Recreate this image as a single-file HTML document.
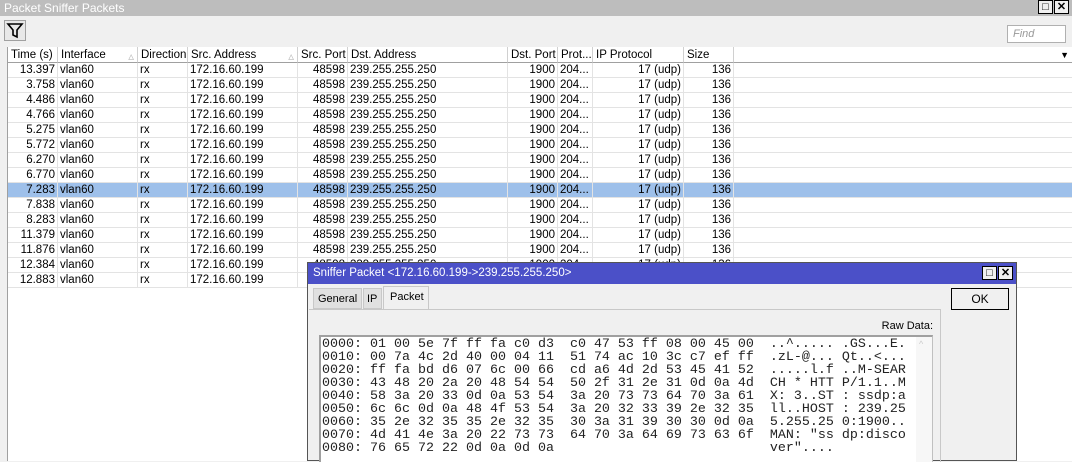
<!DOCTYPE html>
<html><head><style>
*{margin:0;padding:0;box-sizing:border-box}
body{width:1072px;height:461px;overflow:hidden;background:#f0f0f0;font-family:"Liberation Sans",sans-serif;font-size:11px;color:#000;position:relative}
.abs{position:absolute}
.tb{left:0;top:0;width:1072px;height:16px;background:#bdbdbd;color:#fff;font-size:12px;padding:1px 0 0 4px}
.wbtn{top:0;width:15px;height:14px;border:1px solid #000;background:#f0f0f0;font-size:11px;text-align:center;line-height:12px;font-weight:bold}
.grid{left:7px;top:47px;width:1065px;height:414px;background:#fff;border-left:1px solid #a0a0a0}
.hdr{position:absolute;top:0;height:16px;border-right:1px solid #d0d0d0;border-bottom:1px solid #a0a0a0;background:#fff;padding:2px 0 0 3px;white-space:nowrap;font-size:11.5px;z-index:2}
.row{position:absolute;left:0;width:1065px;height:15px;border-bottom:1px solid #e3e3e3}
.c{position:absolute;top:0;height:15px;line-height:15px;border-right:1px solid #e3e3e3;white-space:nowrap;overflow:hidden;padding:0 2px;font-size:11.5px}
.r{text-align:right}
.sel{background:#9ec0ea}
.dlg{left:307px;top:262px;width:710px;height:199px;background:#f0f0f0;border:1px solid #555}
.dt{left:0;top:0;width:708px;height:21px;background:#4b50c8;color:#fff;font-size:11.5px;padding:4px 0 0 5px}
pre{font-family:"Liberation Mono",monospace;font-size:13.33px;line-height:13px;position:absolute;white-space:pre;color:#222}
</style></head><body>
<div class="abs tb">Packet Sniffer Packets</div>
<div class="abs wbtn" style="left:1038px">□</div>
<div class="abs wbtn" style="left:1054px">✕</div>
<div class="abs" style="left:4px;top:20px;width:22px;height:21px;border:1px solid #a0a0a0;background:#e8e8e8">
<svg width="20" height="19" viewBox="0 0 20 19"><path d="M3 3h14l-5 6v7l-4-2V9z" fill="none" stroke="#000" stroke-width="1.6"/></svg></div>
<div class="abs" style="left:1007px;top:25px;width:59px;height:18px;border:1px solid #b0b0b0;background:#fff;color:#999;font-style:italic;padding:2px 0 0 5px">Find</div>
<div class="abs grid">
<div class="hdr" style="left:0;width:50px">Time (s)</div>
<div class="hdr" style="left:50px;width:80px">Interface <span style="color:#bbb;position:absolute;right:3px">▵</span></div>
<div class="hdr" style="left:130px;width:50px">Direction</div>
<div class="hdr" style="left:180px;width:110px">Src. Address <span style="color:#bbb;position:absolute;right:3px">▵</span></div>
<div class="hdr" style="left:290px;width:50px">Src. Port</div>
<div class="hdr" style="left:340px;width:160px">Dst. Address</div>
<div class="hdr" style="left:500px;width:50px">Dst. Port</div>
<div class="hdr" style="left:550px;width:35px">Prot...</div>
<div class="hdr" style="left:585px;width:91px">IP Protocol</div>
<div class="hdr" style="left:676px;width:50px">Size</div>
<div class="hdr" style="left:726px;width:339px;border-right:none"><span style="position:absolute;right:4px;top:3px;font-size:9px">▼</span></div>
<div id="rows"></div>
</div>
<script>
var t=["13.397","3.758","4.486","4.766","5.275","5.772","6.270","6.770","7.283","7.838","8.283","11.379","11.876","12.384","12.883"];
var h="";
for(var i=0;i<t.length;i++){
h+='<div class="row'+(i==8?' sel':'')+'" style="top:'+(16+i*15)+'px">'+
'<div class="c r" style="left:0;width:50px">'+t[i]+'</div>'+
'<div class="c" style="left:50px;width:80px">vlan60</div>'+
'<div class="c" style="left:130px;width:50px">rx</div>'+
'<div class="c" style="left:180px;width:110px">172.16.60.199</div>'+
'<div class="c r" style="left:290px;width:50px">48598</div>'+
'<div class="c" style="left:340px;width:160px">239.255.255.250</div>'+
'<div class="c r" style="left:500px;width:50px">1900</div>'+
'<div class="c" style="left:550px;width:35px">204...</div>'+
'<div class="c r" style="left:585px;width:91px">17 (udp)</div>'+
'<div class="c r" style="left:676px;width:50px">136</div></div>';}
document.getElementById("rows").innerHTML=h;
</script>
<div class="abs dlg">
<div class="abs dt">Sniffer Packet &lt;172.16.60.199-&gt;239.255.255.250&gt;</div>
<div class="abs wbtn" style="left:674px;top:3px">□</div>
<div class="abs wbtn" style="left:690px;top:3px">✕</div>
<div class="abs" style="left:5px;top:25px;width:49px;height:21px;background:#e0e0e0;border:1px solid #c8c8c8;padding:4px 0 0 4px">General</div>
<div class="abs" style="left:55px;top:25px;width:19px;height:21px;background:#e0e0e0;border:1px solid #c8c8c8;padding:4px 0 0 3px">IP</div>
<div class="abs" style="left:75px;top:23px;width:46px;height:24px;background:#f0f0f0;border:1px solid #c8c8c8;border-bottom:none;padding:4px 0 0 6px">Packet</div>
<div class="abs" style="left:1px;top:46px;width:632px;height:153px;border-top:1px solid #c8c8c8;border-right:1px solid #c8c8c8"></div>
<div class="abs" style="left:560px;top:57px;width:65px;text-align:right">Raw Data:</div>
<div class="abs" style="left:11px;top:72px;width:614px;height:127px;background:#fff;border:2px solid #a0a0a0;border-bottom:none;border-right:1px solid #c0c0c0"></div>
<div class="abs" style="left:608px;top:74px;width:16px;height:125px;background:#f7f7f7"></div>
<div class="abs" style="left:611px;top:76px;color:#ccc;font-size:9px">^</div>
<pre style="left:14px;top:75px">0000: 01 00 5e 7f ff fa c0 d3  c0 47 53 ff 08 00 45 00  ..^..... .GS...E.
0010: 00 7a 4c 2d 40 00 04 11  51 74 ac 10 3c c7 ef ff  .zL-@... Qt..&lt;...
0020: ff fa bd d6 07 6c 00 66  cd a6 4d 2d 53 45 41 52  .....l.f ..M-SEAR
0030: 43 48 20 2a 20 48 54 54  50 2f 31 2e 31 0d 0a 4d  CH * HTT P/1.1..M
0040: 58 3a 20 33 0d 0a 53 54  3a 20 73 73 64 70 3a 61  X: 3..ST : ssdp:a
0050: 6c 6c 0d 0a 48 4f 53 54  3a 20 32 33 39 2e 32 35  ll..HOST : 239.25
0060: 35 2e 32 35 35 2e 32 35  30 3a 31 39 30 30 0d 0a  5.255.25 0:1900..
0070: 4d 41 4e 3a 20 22 73 73  64 70 3a 64 69 73 63 6f  MAN: "ss dp:disco
0080: 76 65 72 22 0d 0a 0d 0a                           ver"....</pre>
<div class="abs" style="left:643px;top:25px;width:58px;height:22px;border:1px solid #000;background:#f0f0f0;text-align:center;line-height:20px;font-size:12px">OK</div>
</div>
</body></html>
